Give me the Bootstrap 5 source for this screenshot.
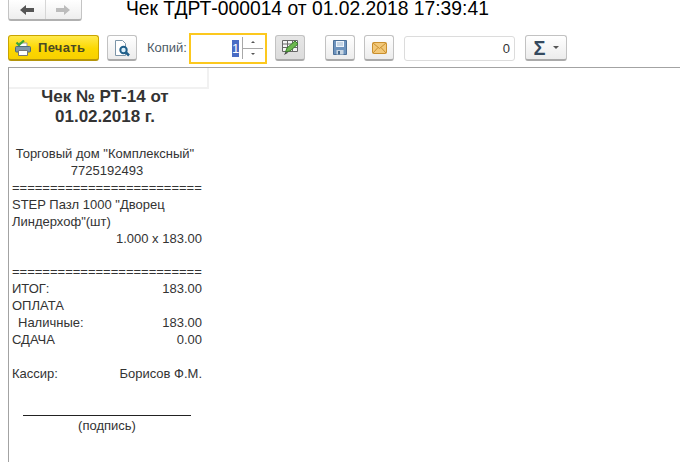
<!DOCTYPE html>
<html lang="ru">
<head>
<meta charset="utf-8">
<title>Чек</title>
<link href="https://cdn.jsdelivr.net/npm/bootstrap@5.3.0/dist/css/bootstrap.min.css" rel="stylesheet">
<style>
html,body{height:100%;}
body{margin:0;background:#fff;font-family:"Liberation Sans",Arial,sans-serif;color:#333;overflow:hidden;}
.app{width:680px;height:462px;display:flex;flex-direction:column;}
.topbar{height:29px;padding-left:8px;}
.navgroup{width:74px;height:21px;border:1px solid #c4c4c4;border-top:0;border-radius:0 0 3px 3px;border-bottom:2px solid #b0b0b0;background:linear-gradient(#fff,#eee);}
.navbtn{width:37px;display:flex;align-items:center;justify-content:center;}
.navbtn+.navbtn{border-left:1px solid #d6d6d6;}
.doc-title{margin:0 0 0 44px;font-size:19.3px;line-height:18px;font-weight:400;color:#000;white-space:nowrap;}
.tools{height:38px;padding-left:8px;align-items:center;}
.tbtn{height:26px;width:30px;padding:0;border:1px solid #c2c2c2;border-bottom:2px solid #aaa;border-radius:3px;background:linear-gradient(#fff,#ececec);display:flex;align-items:center;justify-content:center;flex:none;}
.printbtn{width:91px;height:26px;padding:0 0 0 6px;border:1px solid #c9a400;border-bottom:2px solid #b5950a;border-radius:3px;background:linear-gradient(#ffe94d,#fcd800 55%,#f7d000);color:#4b4a24;font-size:13px;font-weight:700;display:flex;align-items:center;gap:7px;flex:none;letter-spacing:.3px;}
.copies{font-size:13px;color:#4d5a66;margin-left:10px;width:42px;flex:none;}
.spinbox{width:78px;height:31px;border:2px solid #fcc81e;display:flex;align-items:center;justify-content:flex-end;font-size:13px;flex:none;background:#fff;}
.sel{background:#4a6cc4;color:#fff;line-height:17px;width:7px;text-align:center;margin-right:3px;}
.spin{width:21px;height:22px;border-left:1px solid #a8a8a8;margin-right:2px;display:flex;flex-direction:column;align-items:center;}
.spin span{flex:1;width:100%;display:flex;align-items:center;justify-content:center;}
.spin span:first-child{border-bottom:1px solid #a8a8a8;}
.spin i{display:block;width:0;height:0;border-left:2px solid transparent;border-right:2px solid transparent;}
.up{border-bottom:2px solid #555;}
.down{border-top:2px solid #555;}
.pressed{background:linear-gradient(#e6e6e6,#dcdcdc);}
.numbox{width:111px;height:25px;border:1px solid #dcdcdc;border-radius:3px;font-size:13px;color:#333;text-align:right;padding:0 4px 0 0;line-height:23px;flex:none;}
.sumbtn{width:42px;gap:7px;}
.sigma{font-size:20px;font-weight:700;color:#34495e;line-height:1;}
.caret-s{width:0;height:0;border-left:3px solid transparent;border-right:3px solid transparent;border-top:3px solid #555;}
.gap-a{margin-left:20px;}
.gap-b{margin-left:9px;}
.gap-c{margin-left:10px;}
.sheet{flex:1;margin-left:8px;border-top:1px solid #a3a3a3;border-left:1px solid #a3a3a3;min-height:0;}
.receipt{width:200px;font-size:13px;line-height:17px;color:#333;}
.emptycell{height:21px;border-right:2px solid #f1f1f1;border-bottom:2px solid #f1f1f1;}
.rhead{font-size:17px;line-height:20px;font-weight:700;text-align:center;padding:0 8px 0 0;margin:-2px 0 18px;color:#333;}
.rbody{padding:0 7px 0 3px;}
.center{text-align:center;}
.gap17{height:17px;}
.gap16{height:16px;}
.eq{white-space:nowrap;overflow:hidden;}
.indent{padding-left:6px;}
.sign{width:168px;margin:33px 0 0 11px;border-top:1px solid #222;text-align:center;line-height:20px;}
</style>
</head>
<body>
<div class="app">
  <div class="topbar d-flex align-items-start">
    <div class="navgroup d-flex">
      <div class="navbtn"><svg width="16" height="12" viewBox="0 0 16 12"><path d="M1 6l6-5v3h8v4H7v3z" fill="#555"/></svg></div>
      <div class="navbtn"><svg width="16" height="12" viewBox="0 0 16 12"><path d="M15 6L9 1v3H1v4h8v3z" fill="#bcbcbc"/></svg></div>
    </div>
    <h1 class="doc-title">Чек ТДРТ-000014 от 01.02.2018 17:39:41</h1>
  </div>
  <div class="tools d-flex">
    <button class="printbtn" type="button">
      <svg width="16" height="16" viewBox="0 0 16 16"><path d="M4 3h8v5H4z" fill="#fff" stroke="#999"/><rect x=".5" y="6.500" width="15" height="5.500" rx="1" fill="#7f97a8" stroke="#4e6a7c"/><path d="M3.500 10.500h9v5h-9z" fill="#fff" stroke="#777"/><path d="M1.500 2.500l2.500 2.500 5-4.500" fill="none" stroke="#3aa63a" stroke-width="2.200"/></svg>
      <span>Печать</span>
    </button>
    <button class="tbtn ms-2" type="button">
      <svg width="18" height="18" viewBox="0 0 18 18"><path d="M2.500 1.500h7l3 3v12h-10z" fill="#fff" stroke="#7c95a8"/><circle cx="10.500" cy="11" r="3.200" fill="#d9eefa" stroke="#1f5f8a" stroke-width="2"/><path d="M13 13.500l3 3" stroke="#1f5f8a" stroke-width="2.500"/></svg>
    </button>
    <span class="copies">Копий:</span>
    <div class="spinbox">
      <span class="sel">1</span>
      <div class="spin"><span><i class="up"></i></span><span><i class="down"></i></span></div>
    </div>
    <button class="tbtn pressed ms-2" type="button">
      <svg width="18" height="17" viewBox="0 0 18 17"><path d="M1.500 1.500h15v11h-15zM1.500 5h15M1.500 8.500h15M6.500 1.500v11M11.500 1.500v11" fill="#f4f4f4" stroke="#666"/><path d="M4.500 13l1.500-4 8-7 3 3-8 7z" fill="#6cb84f" stroke="#3a7d2c"/><path d="M3 16l1.500-3 3 .5z" fill="#444"/></svg>
    </button>
    <button class="tbtn gap-a" type="button">
      <svg width="14" height="15" viewBox="0 0 14 15"><path d="M.5.500h13v14H.5z" fill="#6d93bd" stroke="#4c7098"/><path d="M3 1h8v6H3z" fill="#eef4fa"/><path d="M4 3h6M4 5h6" stroke="#9db5cd"/><path d="M3.500 10h7v4.500h-7z" fill="#c9d6e2"/><path d="M5 11h2v3.500H5z" fill="#47698c"/></svg>
    </button>
    <button class="tbtn gap-b" type="button">
      <svg width="15" height="12" viewBox="0 0 15 12"><rect x=".5" y=".5" width="14" height="11" rx="1" fill="#f2c879" stroke="#c98f2e"/><path d="M1 1l6.500 5.500L14 1M1 11l5-5.500M14 11L9 5.500" fill="none" stroke="#c98f2e"/></svg>
    </button>
    <div class="numbox gap-c">0</div>
    <button class="tbtn sumbtn gap-c" type="button"><span class="sigma">Σ</span><span class="caret-s"></span></button>
  </div>
  <div class="sheet">
    <div class="receipt">
      <div class="emptycell"></div>
      <div class="rhead">Чек № РТ-14 от<br>01.02.2018 г.</div>
      <div class="rbody">
        <div class="center pe-1">Торговый дом "Комплексный"</div>
        <div class="center">7725192493</div>
        <div class="eq">=========================</div>
        <div>STEP Пазл 1000 "Дворец Линдерхоф"(шт)</div>
        <div class="text-end">1.000 x 183.00</div>
        <div class="gap16"></div>
        <div class="eq">=========================</div>
        <div class="d-flex justify-content-between"><span>ИТОГ:</span><span>183.00</span></div>
        <div>ОПЛАТА</div>
        <div class="d-flex justify-content-between"><span class="indent">Наличные:</span><span>183.00</span></div>
        <div class="d-flex justify-content-between"><span>СДАЧА</span><span>0.00</span></div>
        <div class="gap17"></div>
        <div class="d-flex justify-content-between"><span>Кассир:</span><span>Борисов Ф.М.</span></div>
        <div class="sign">(подпись)</div>
      </div>
    </div>
  </div>
</div>
<script src="https://cdn.jsdelivr.net/npm/bootstrap@5.3.0/dist/js/bootstrap.bundle.min.js"></script>
</body>
</html>
